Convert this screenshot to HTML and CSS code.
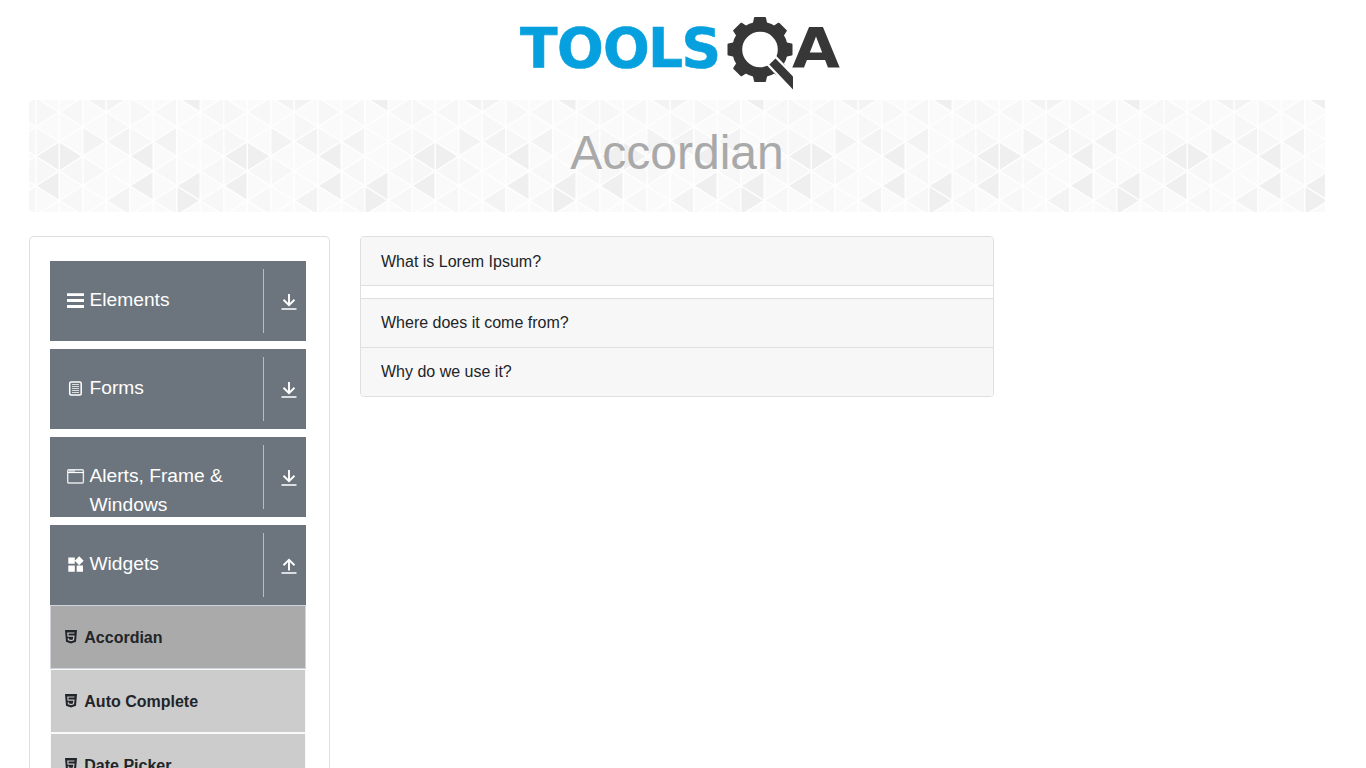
FILE: index.html
```
<!DOCTYPE html>
<html lang="en">
<head>
<meta charset="utf-8">
<title>ToolsQA</title>
<link rel="stylesheet" href="styles.css">
</head>
<body>
<svg class="defs" width="0" height="0" aria-hidden="true">
  <symbol id="down" viewBox="0 0 16 18"><path d="M8 1v11M2.500 6.700 8 12.100l5.500-5.400" fill="none" stroke="#fff" stroke-width="1.900"/><path d="M.5 16h15" stroke="#e2e4e6" stroke-width="1.900"/></symbol>
  <symbol id="up" viewBox="0 0 16 18"><path d="M8 13.500V3M2.500 8.200 8 2.800l5.500 5.400" fill="none" stroke="#fff" stroke-width="1.900"/><path d="M.5 16h15" stroke="#e2e4e6" stroke-width="1.900"/></symbol>
  <symbol id="html5" viewBox="0 0 12 14"><path d="M0 0h12l-1 11.800L6 13.600 1 11.800z" fill="#212529"/><path d="M9.500 3H2.800l.3 3.200h5.800l-.4 3.500L6 10.600l-2.600-.9-.1-1.400" fill="none" stroke="#c4c4c4" stroke-width="1.200"/></symbol>
</svg>
<header class="top">
  <svg class="logo" width="322" height="76" viewBox="518 15 322 76">
    <text class="word blue" x="520 557 603 648 681.500" y="66.500">TOOLS</text>
    <g stroke="#373737" fill="none">
      <circle cx="760" cy="49.500" r="22.800" stroke-width="10"/>
      <g id="teeth" fill="#373737" stroke-width="2" stroke-linejoin="round">
        <path id="bar" d="M755 18h10l1.500 7h-13zM755 81h10l1.500-7h-13z"/>
        <use href="#bar" transform="rotate(45 760 49.500)"/>
        <use href="#bar" transform="rotate(90 760 49.500)"/>
        <use href="#bar" transform="rotate(135 760 49.500)"/>
      </g>
    </g>
    <path d="M769.300 64.500 775.500 58.500 793 76.500v13z" fill="#373737" stroke="#fff" stroke-width="4.500" paint-order="stroke"/>
    <text class="word dark" x="792" y="67" textLength="48" lengthAdjust="spacingAndGlyphs">A</text>
  </svg>
</header>
<div class="banner">
  <svg class="mosaic" width="1296" height="112">
    <defs>
      <g id="tile">
        <path fill="#efefef" d="M0 4l1-1v2zM2 4l-1-1v2zM0 6l1-1v2zM4 4l1-1v2zM4 6l1-1v2zM6 0l1-1v2zM6 6l1-1v2zM7 7l-1-1v2z"/>
        <path fill="#f3f3f3" d="M2 0l1-1v2zM4 0l-1-1v2zM3 3l-1-1v2zM3 3l1-1v2zM3 7l1-1v2zM5 3l1-1v2z"/>
        <path fill="#f7f7f7" d="M1 1l-1-1v2zM1 1l1-1v2zM4 2l-1-1v2zM5 1l-1-1v2zM5 1l1-1v2zM5 3l-1-1v2zM5 5l1-1v2zM3 5l-1-1v2zM1 5l1-1v2zM1 5l-1-1v2zM1 3l-1-1v2zM1 7l1-1v2zM7 1l1-1v2zM7 3l1-1v2zM7 5l1-1v2zM7 7l1-1v2zM5 7l1-1v2z"/>
        <path class="grid" d="M0-1V9M1-1V9M2-1V9M3-1V9M4-1V9M5-1V9M6-1V9M7-1V9M0 0l8 8M0 2l7 7M0 4l5 5M0 6l3 3M2 0l6 6M4 0l4 4M6 0l2 2M0 0l1-1M0 2l3-3M0 4l5-5M0 6l7-7M0 8l8-8M1 9l7-7M3 9l5-5M5 9l3-3M7 9l1-1M1-1l1 1M3-1l1 1M5-1l1 1M7-1l1 1"/>
      </g>
    </defs>
    <g transform="translate(6.700 -2.700) scale(23.500 14.750)">
      <use href="#tile" x="-8"/><use href="#tile"/><use href="#tile" x="8"/><use href="#tile" x="16"/><use href="#tile" x="24"/><use href="#tile" x="32"/><use href="#tile" x="40"/><use href="#tile" x="48"/>
    </g>
  </svg>
  <h1 class="title">Accordian</h1>
</div>
<main class="columns">
  <nav class="sidebar">
    <div class="group"><svg class="icon" width="18" height="18"><path d="M0 3.700h17M0 9.500h17M0 15.500h17" stroke="#fff" stroke-width="2.800"/></svg><span class="label">Elements</span><span class="toggle"><svg width="16" height="18"><use href="#down"/></svg></span></div>
    <div class="group"><svg class="icon" width="18" height="18"><rect x="2.700" y="3" width="11.500" height="13" rx="1.500" fill="none" stroke="#fff" stroke-width="1.500"/><path d="M5 5.500h7M5 7.500h7M5 9.500h7M5 11.500h7M5 13.500h7" stroke="#d8dbdd"/></svg><span class="label">Forms</span><span class="toggle"><svg width="16" height="18"><use href="#down"/></svg></span></div>
    <div class="group"><svg class="icon" width="18" height="18"><rect x=".7" y="2.700" width="15.700" height="13.300" rx="1" fill="none" stroke="#e6e8e9" stroke-width="1.400"/><path d="M1 5.500h16" stroke="#fff" stroke-width="1.200"/><path d="M2.500 4h1M4.500 4h1M6.500 4h1" stroke="#fff" stroke-width="2"/></svg><span class="label">Alerts, Frame &amp; Windows</span><span class="toggle"><svg width="16" height="18"><use href="#down"/></svg></span></div>
    <div class="group"><svg class="icon" width="18" height="18" fill="#fff"><path d="M1.300 2.500h6.500v6.300H1.300zM1.300 10.500h6.500v6.300H1.300zM9.700 10.500h6.300v6.300H9.700zM12.200 1.200 16.700 5.700l-4.500 4.500L7.700 5.700z"/></svg><span class="label">Widgets</span><span class="toggle"><svg width="16" height="18"><use href="#up"/></svg></span></div>
    <ul class="menu">
      <li class="item active"><svg width="12" height="14"><use href="#html5"/></svg><span class="name">Accordian</span></li>
      <li class="item"><svg width="12" height="14"><use href="#html5"/></svg><span class="name">Auto Complete</span></li>
      <li class="item"><svg width="12" height="14"><use href="#html5"/></svg><span class="name">Date Picker</span></li>
    </ul>
  </nav>
  <section class="accordion">
    <div class="question first">What is Lorem Ipsum?</div>
    <div class="answer"></div>
    <div class="question">Where does it come from?</div>
    <div class="question">Why do we use it?</div>
  </section>
</main>
</body>
</html>
```
FILE: styles.css
```
* { box-sizing: border-box; }
body { display: flex; flex-direction: column; margin: 0; height: 768px; overflow: hidden; background: #fff; color: #212529; font: 16px/24px "Liberation Sans", Arial, sans-serif; }
svg { display: block; flex: none; }
.defs { position: absolute; }
.top { flex: none; height: 100px; padding: 15px 0 0 518px; }
.word { font: bold 55px "DejaVu Sans", sans-serif; }
.blue { fill: #06a0df; stroke: #06a0df; stroke-width: .6px; }
.dark { fill: #373737; }
.banner { display: grid; flex: none; width: 1296px; height: 112px; margin-left: 29px; background: #fafafa; }
.mosaic, .title { grid-area: 1 / 1; }
.grid { fill: none; stroke: #fefefe; stroke-width: 1.5px; vector-effect: non-scaling-stroke; }
.title { z-index: 1; margin: 0; padding-top: 24px; text-align: center; font-size: 48px; font-weight: 400; line-height: 57.6px; color: #a9a9a9; }
.columns { display: flex; flex: 1; min-height: 0; align-items: flex-start; gap: 30px; padding: 24px 0 0 29px; }
.sidebar { width: 301px; height: 532px; overflow: hidden; padding: 24px 23px 0 20px; border: 1px solid #dfdfdf; border-bottom: 0; border-radius: 5px 5px 0 0; }
.group { display: flex; height: 80px; margin-bottom: 8px; padding: 8px 9px 8px 16px; overflow: hidden; background: #6c757d; color: #fff; }
.group:nth-of-type(4) { margin-bottom: 0; }
.icon { margin: 22px 6px 0 1px; }
.label { flex: 1; height: 72px; margin-left: -1.5px; padding-top: 17px; font-size: 19.2px; line-height: 28.8px; }
.toggle { height: 64px; padding: 24px 0 0 17px; border-left: 1px solid #b9bdc1; }
.menu { margin: 0; padding: 0; list-style: none; }
.item { display: flex; align-items: center; gap: 7px; height: 64px; padding-left: 14px; border: 1px solid #f8f9fa; background: #ccc; font-weight: 700; }
.name { padding: 2px 0 0 .3px; }
.active { border-color: #d0d2dc; background: #aaa; }
.accordion { width: 634px; border: 1px solid #dfdfdf; border-radius: 4px; overflow: hidden; }
.question { height: 49px; padding: 12px 20px; border-bottom: 1px solid #dfdfdf; background: #f7f7f7; }
.first { padding-top: 13px; }
.question:last-child { height: 48px; border-bottom: 0; }
.answer { height: 13px; border-bottom: 1px solid #dfdfdf; }
```
